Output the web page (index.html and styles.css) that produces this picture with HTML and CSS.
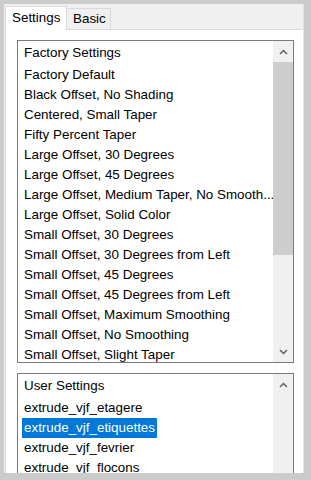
FILE: index.html
```html
<!DOCTYPE html>
<html lang="en">

<head>
  <meta charset="UTF-8">
  <title>Extrude Settings</title>
  <link rel="stylesheet" href="styles.css">
</head>

<body>
  <div class="window">
    <div class="tabs">
      <div class="tab active">Settings</div>
      <div class="tab">Basic</div>
    </div>

    <div class="panel">
      <div class="listbox factory">
        <ul class="items">
          <li class="head"><span>Factory Settings</span></li>
          <li><span>Factory Default</span></li>
          <li><span>Black Offset, No Shading</span></li>
          <li><span>Centered, Small Taper</span></li>
          <li><span>Fifty Percent Taper</span></li>
          <li><span>Large Offset, 30 Degrees</span></li>
          <li><span>Large Offset, 45 Degrees</span></li>
          <li><span>Large Offset, Medium Taper, No Smooth...</span></li>
          <li><span>Large Offset, Solid Color</span></li>
          <li><span>Small Offset, 30 Degrees</span></li>
          <li><span>Small Offset, 30 Degrees from Left</span></li>
          <li><span>Small Offset, 45 Degrees</span></li>
          <li><span>Small Offset, 45 Degrees from Left</span></li>
          <li><span>Small Offset, Maximum Smoothing</span></li>
          <li><span>Small Offset, No Smoothing</span></li>
          <li><span>Small Offset, Slight Taper</span></li>
        </ul>
        <div class="scrollbar">
          <div class="arrow">
            <svg width="9" height="6" viewBox="0 0 9 6"><path d="M1 5 L4.5 1.5 L8 5" /></svg>
          </div>
          <div class="thumb"></div>
          <div class="track"></div>
          <div class="arrow">
            <svg width="9" height="6" viewBox="0 0 9 6"><path d="M1 1 L4.5 4.5 L8 1" /></svg>
          </div>
        </div>
      </div>

      <div class="listbox user">
        <ul class="items">
          <li class="head"><span>User Settings</span></li>
          <li><span>extrude_vjf_etagere</span></li>
          <li class="selected"><span>extrude_vjf_etiquettes</span></li>
          <li><span>extrude_vjf_fevrier</span></li>
          <li><span>extrude_vjf_flocons</span></li>
        </ul>
        <div class="scrollbar">
          <div class="arrow">
            <svg width="9" height="6" viewBox="0 0 9 6"><path d="M1 5 L4.5 1.5 L8 5" /></svg>
          </div>
          <div class="track"></div>
        </div>
      </div>
    </div>
  </div>
</body>

</html>
```

FILE: styles.css
```css
* {
  margin: 0;
  padding: 0;
  box-sizing: border-box;
}

body {
  width: 311px;
  height: 480px;
  overflow: hidden;
  background-color: #cbcbcb;
  font-family: "Liberation Sans", Arial, sans-serif;
  font-size: 13.4px;
  line-height: 20px;
  color: #000;
}

.window {
  width: 300px;
  height: 469px;
  margin: 4px 0 0 4px;
  overflow: hidden;
  background-color: #f0f0f0;
  border-right: 1px solid #e2e2e2;
}

/* tabs */

.tabs {
  display: flex;
  align-items: flex-end;
  height: 25px;
  padding-left: 1px;
}

.tab {
  height: 21px;
  width: 45px;
  margin-left: -1px;
  padding-left: 6px;
  border: 1px solid #d9d9d9;
  border-bottom: none;
  background-color: #f0f0f0;
}

.tab.active {
  position: relative;
  z-index: 1;
  width: 62px;
  height: 24px;
  margin-left: 0;
  margin-bottom: -1px;
  padding: 1px 0 0 6px;
  background-color: #fff;
}

.panel {
  width: 299px;
  margin-left: 1px;
  padding: 10px 9px 0 11px;
  height: 460px;
  border: 1px solid #d9d9d9;
  border-bottom: none;
  background-color: #fff;
}

/* list boxes */

.listbox {
  display: flex;
  border: 1px solid #7a7a7a;
  background-color: #fff;
}

.listbox.factory {
  height: 323px;
}

.listbox.user {
  height: 140px;
  margin-top: 10px;
}

.items {
  flex: 1;
  overflow: hidden;
  list-style: none;
}

.items li {
  padding-left: 4px;
  white-space: nowrap;
}

.items li span {
  display: inline-block;
  padding: 0 2px;
}

.items li.head {
  padding-top: 2px;
  padding-bottom: 2px;
}

.items li.selected span {
  background-color: #0078d7;
  color: #fff;
}

.scrollbar {
  display: flex;
  flex-direction: column;
  width: 20px;
  background-color: #f0f0f0;
}

.scrollbar .arrow {
  display: flex;
  align-items: center;
  justify-content: center;
  height: 21px;
  flex-shrink: 0;
}

.scrollbar .arrow path {
  fill: none;
  stroke: #606060;
  stroke-width: 1.5;
}

.scrollbar .thumb {
  height: 193px;
  flex-shrink: 0;
  background-color: #cdcdcd;
}

.scrollbar .track {
  flex: 1;
}
```
